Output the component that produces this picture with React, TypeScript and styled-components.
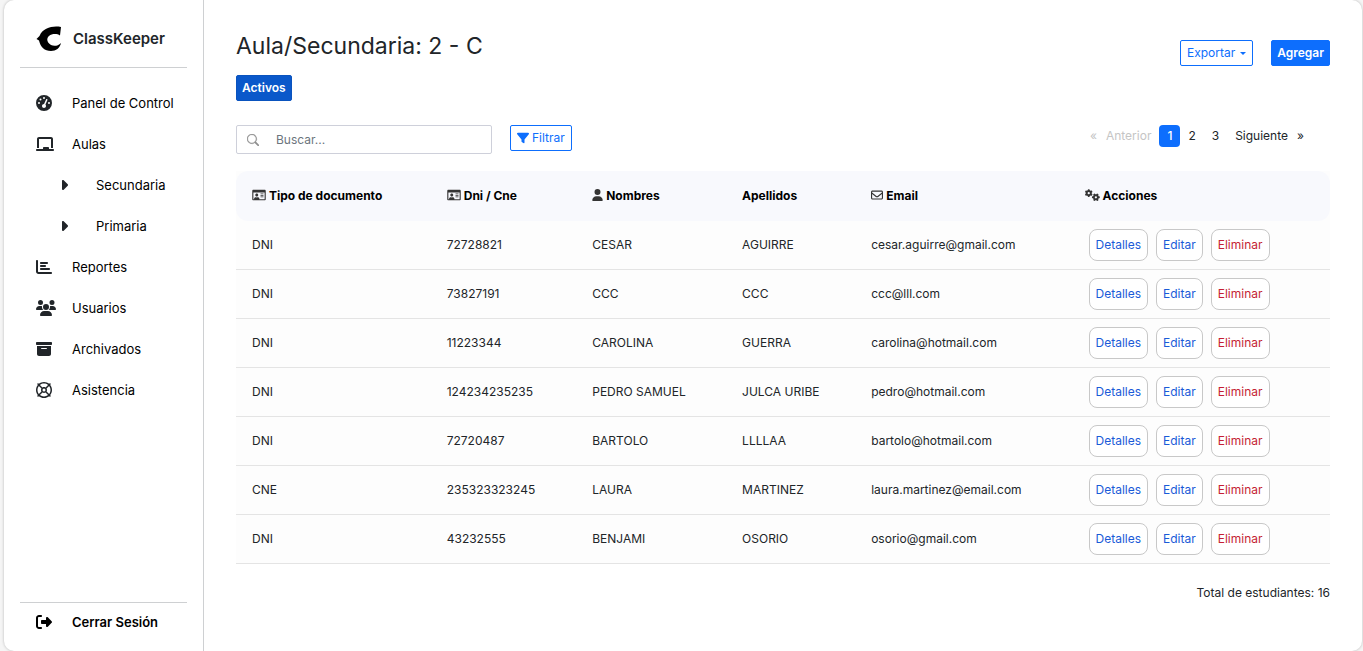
import React from "react";
import styled, { createGlobalStyle, css } from "styled-components";
import {
  FaGaugeHigh,
  FaCaretRight,
  FaChalkboard,
  FaChartBar,
  FaUsers,
  FaUser,
  FaRegEnvelope,
  FaRegLifeRing,
  FaBoxArchive,
  FaRightFromBracket,
  FaFilter,
  FaGears,
} from "react-icons/fa6";
import { BsSearch } from "react-icons/bs";
import { FaRegIdCard } from "react-icons/fa";

const GlobalStyle = createGlobalStyle`
  *, *::before, *::after { box-sizing: border-box; }
  body {
    margin: 0;
    background: #f5f5f5;
    color: #212529;
    font-family: Inter, "Liberation Sans", sans-serif;
    font-size: 12px;
    line-height: 18px;
  }
  button, input { font: inherit; }
`;

const Shell = styled.div`
  display: flex;
  min-height: 100vh;
  margin: 0 1px 0 4px;
  background: #fff;
  border-radius: 10px;
  box-shadow: 0 0 3px rgba(0, 0, 0, 0.25);
`;

const Sidebar = styled.aside`
  display: flex;
  flex-direction: column;
  flex: 0 0 200px;
  padding: 16px;
  border-right: 1px solid #ced0d2;
  font-size: 13px;
  line-height: 20px;
`;

const Brand = styled.div`
  display: flex;
  align-items: center;
  gap: 11px;
  height: 52px;
  padding: 0 0 6px 16px;
  border-bottom: 1px solid #ced0d2;
  font-size: 15px;
  font-weight: 600;
`;

const Menu = styled.ul`
  flex: 1;
  margin: 14px 0 0;
  padding: 0;
  list-style: none;
`;

const MenuLink = styled.a<{ $nested?: boolean }>`
  display: flex;
  align-items: center;
  height: 41px;
  padding-left: ${(p) => (p.$nested ? 40 : 16)}px;
  color: #000;
  text-decoration: none;
  white-space: nowrap;
`;

const MenuIcon = styled.span<{ $width?: number }>`
  display: flex;
  flex: 0 0 36px;
  color: #212529;
  svg {
    width: ${(p) => p.$width ?? 16}px;
    height: 16px;
  }
`;

const Logout = styled.div`
  height: 33px;
  border-top: 1px solid #ced0d2;
  font-weight: 600;
  ${MenuLink} { height: 38px; }
  ${MenuIcon} { color: #000; }
`;

const Main = styled.main`
  flex: 1;
  min-width: 0;
  padding: 28px 32px 32px;
`;

const Bar = styled.div`
  display: flex;
  justify-content: space-between;
  align-items: flex-start;
`;

const Title = styled.h1`
  margin: 0;
  font-size: 23px;
  line-height: 36px;
  font-weight: 400;
`;

const Actions = styled.div`
  display: flex;
  gap: 18px;
  padding-top: 12px;
`;

const Button = styled.button<{ $kind: "outline" | "primary" | "active" }>`
  display: inline-flex;
  align-items: center;
  gap: 3px;
  height: 26px;
  padding: 0 6px;
  border: 1px solid #0d6efd;
  border-radius: 2px;
  background: #fff;
  color: #0d6efd;
  ${(p) =>
    p.$kind !== "outline" &&
    css`
      padding: 0 5px;
      color: #fff;
      font-weight: 600;
      background: ${p.$kind === "active" ? "#0a58ca" : "#0d6efd"};
      border-color: ${p.$kind === "active" ? "#0a53be" : "#0d6efd"};
    `}
`;

const Caret = styled.span`
  margin-left: 2px;
  border: 3px solid transparent;
  border-top-color: currentColor;
  border-bottom: 0;
`;

const Tabs = styled.div`
  display: flex;
  margin: 9px 0 24px;
`;

const Tools = styled.div`
  display: flex;
  align-items: flex-start;
  gap: 18px;
`;

const SearchBox = styled.label`
  display: flex;
  align-items: center;
  width: 256px;
  height: 29px;
  padding-left: 10px;
  gap: 17px;
  border: 1px solid #ced0da;
  border-radius: 2px;
  color: #909090;
`;

const SearchInput = styled.input`
  flex: 1;
  min-width: 0;
  padding: 0;
  border: 0;
  outline: 0;
  background: transparent;
  &::placeholder { color: #6c757d; opacity: 1; }
`;

const Pager = styled.nav`
  display: flex;
  padding-right: 25px;
`;

const PageLink = styled.a<{ $state?: "current" | "disabled"; $arrow?: boolean }>`
  height: 22px;
  padding: 2px ${(p) => (p.$arrow ? 1 : 8)}px;
  border-radius: 4px;
  text-decoration: none;
  font-weight: ${(p) => (p.$state === "current" ? 500 : 400)};
  color: ${(p) => (p.$state === "current" ? "#fff" : p.$state === "disabled" ? "#c5c5c5" : "#212529")};
  background: ${(p) => (p.$state === "current" ? "#0d6efd" : "transparent")};
`;

const Table = styled.table`
  width: 100%;
  margin-top: 17px;
  border-collapse: separate;
  border-spacing: 0;
  background: #fdfdfd;
`;

const HeadCell = styled.th<{ $share: number }>`
  width: ${(p) => p.$share}%;
  height: 50px;
  padding: 0 16px;
  background: #f8f9fd;
  color: #000;
  font-weight: 700;
  text-align: left;
  white-space: nowrap;
  &:first-child { border-radius: 12px 0 0 12px; }
  &:last-child { border-radius: 0 12px 12px 0; }
`;

const HeadIcon = styled.span<{ $width: number }>`
  margin-right: 3px;
  color: #343434;
  svg {
    width: ${(p) => p.$width}px;
    height: 12px;
    vertical-align: -1px;
  }
`;

const Cell = styled.td`
  height: 49px;
  padding: 0 16px;
  border-bottom: 1px solid #e4e4e4;
  white-space: nowrap;
`;

const RowActions = styled.div`
  display: flex;
  gap: 8px;
  padding: 0 4px;
`;

const RowButton = styled.button<{ $danger?: boolean }>`
  height: 32px;
  padding: 0 6px;
  border: 1px solid #c8c8c8;
  border-radius: 8px;
  background: #fff;
  color: ${(p) => (p.$danger ? "#c51f35" : "#1a5bd8")};
`;

const Total = styled.p`
  margin: 20px 0 0;
  text-align: right;
`;

const menu = [
  { label: "Panel de Control", icon: <FaGaugeHigh /> },
  { label: "Aulas", icon: <FaChalkboard />, width: 18 },
  { label: "Secundaria", icon: <FaCaretRight />, width: 8, nested: true },
  { label: "Primaria", icon: <FaCaretRight />, width: 8, nested: true },
  { label: "Reportes", icon: <FaChartBar /> },
  { label: "Usuarios", icon: <FaUsers />, width: 20 },
  { label: "Archivados", icon: <FaBoxArchive /> },
  { label: "Asistencia", icon: <FaRegLifeRing /> },
];

const columns = [
  { label: "Tipo de documento", share: 17.8, icon: <FaRegIdCard />, width: 14 },
  { label: "Dni / Cne", share: 13.3, icon: <FaRegIdCard />, width: 14 },
  { label: "Nombres", share: 13.7, icon: <FaUser />, width: 11 },
  { label: "Apellidos", share: 11.8 },
  { label: "Email", share: 19.5, icon: <FaRegEnvelope />, width: 12 },
  { label: "Acciones", share: 23.9, icon: <FaGears />, width: 15 },
];

const students = [
  ["DNI", "72728821", "CESAR", "AGUIRRE", "cesar.aguirre@gmail.com"],
  ["DNI", "73827191", "CCC", "CCC", "ccc@lll.com"],
  ["DNI", "11223344", "CAROLINA", "GUERRA", "carolina@hotmail.com"],
  ["DNI", "124234235235", "PEDRO SAMUEL", "JULCA URIBE", "pedro@hotmail.com"],
  ["DNI", "72720487", "BARTOLO", "LLLLAA", "bartolo@hotmail.com"],
  ["CNE", "235323323245", "LAURA", "MARTINEZ", "laura.martinez@email.com"],
  ["DNI", "43232555", "BENJAMI", "OSORIO", "osorio@gmail.com"],
];

export default function App() {
  return (
    <>
      <GlobalStyle />
      <Shell>
        <Sidebar>
          <Brand>
            <svg width="26" height="26" viewBox="0 0 26 26" aria-hidden="true">
              <path d="M25 1C17 -0.5 7 1.500 3.500 10L0.500 13L3 14.500C4.500 21 8.500 25 15 25C20 25 24 22 25 17C22 20 18 20.500 15 19C11 17 10 12.500 13 10C16 7.500 21 7.500 24 9.500Z" />
            </svg>
            ClassKeeper
          </Brand>
          <Menu>
            {menu.map((m) => (
              <li key={m.label}>
                <MenuLink href="#" $nested={m.nested}>
                  <MenuIcon $width={m.width}>{m.icon}</MenuIcon>
                  {m.label}
                </MenuLink>
              </li>
            ))}
          </Menu>
          <Logout>
            <MenuLink href="#">
              <MenuIcon><FaRightFromBracket /></MenuIcon>
              Cerrar Sesión
            </MenuLink>
          </Logout>
        </Sidebar>
        <Main>
          <Bar>
            <Title>Aula/Secundaria: 2 - C</Title>
            <Actions>
              <Button $kind="outline">Exportar <Caret /></Button>
              <Button $kind="primary">Agregar</Button>
            </Actions>
          </Bar>
          <Tabs><Button $kind="active">Activos</Button></Tabs>
          <Bar>
            <Tools>
              <SearchBox>
                <BsSearch size={12} stroke="currentColor" strokeWidth={0.5} />
                <SearchInput type="text" placeholder="Buscar..." aria-label="Buscar" />
              </SearchBox>
              <Button $kind="outline"><FaFilter size={12} />Filtrar</Button>
            </Tools>
            <Pager aria-label="Paginación">
              <PageLink href="#" $state="disabled" $arrow>«</PageLink>
              <PageLink href="#" $state="disabled">Anterior</PageLink>
              <PageLink href="#" $state="current">1</PageLink>
              <PageLink href="#">2</PageLink>
              <PageLink href="#">3</PageLink>
              <PageLink href="#">Siguiente</PageLink>
              <PageLink href="#" $arrow>»</PageLink>
            </Pager>
          </Bar>
          <Table>
            <thead>
              <tr>
                {columns.map((c) => (
                  <HeadCell key={c.label} $share={c.share}>
                    {c.icon && <HeadIcon $width={c.width}>{c.icon}</HeadIcon>}
                    {c.label}
                  </HeadCell>
                ))}
              </tr>
            </thead>
            <tbody>
              {students.map((s) => (
                <tr key={s[1]}>
                  {s.map((v, i) => <Cell key={i}>{v}</Cell>)}
                  <Cell>
                    <RowActions>
                      <RowButton>Detalles</RowButton>
                      <RowButton>Editar</RowButton>
                      <RowButton $danger>Eliminar</RowButton>
                    </RowActions>
                  </Cell>
                </tr>
              ))}
            </tbody>
          </Table>
          <Total>Total de estudiantes: 16</Total>
        </Main>
      </Shell>
    </>
  );
}
